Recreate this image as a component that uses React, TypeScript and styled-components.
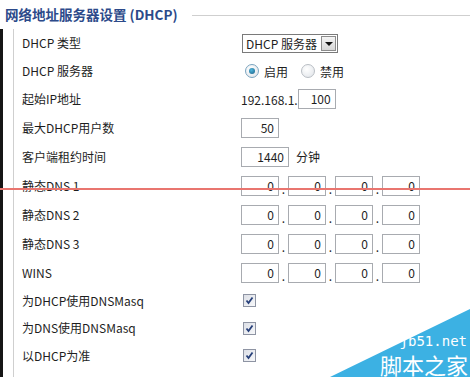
import React from "react"
import styled, { createGlobalStyle } from "styled-components"

const GlobalStyle = createGlobalStyle`
    html, body {
        margin: 0;
        padding: 0;
        background: #fff;
    }
    body {
        font-family: "Noto Sans CJK SC", "DejaVu Sans", sans-serif;
        font-size: 12px;
        color: #1e1e1e;
    }
`

const Page = styled.div`
    position: relative;
    width: 470px;
    height: 377px;
    overflow: hidden;
    background: #fff;
`

const Header = styled.div`
    display: flex;
    align-items: center;
    height: 29px;
    padding-left: 5px;
    gap: 14px;
`

const Title = styled.h2`
    margin: 0;
    font-size: 13.5px;
    font-weight: bold;
    color: #2c4a8a;
    white-space: nowrap;
    line-height: 29px;
`

const TitleRule = styled.div`
    flex: 1;
    height: 1px;
    background: #cfcfcf;
    margin-top: 1px;
`

const Edge = styled.div`
    border-left: 3px solid #151515;
    height: 348px;
`

const Fieldset = styled.div`
    margin-left: 10px;
    border-left: 1px solid #cfcfcf;
    padding-left: 8px;
    height: 100%;
`

const Row = styled.div<{ $h: number }>`
    display: grid;
    grid-template-columns: 219px 1fr;
    align-items: center;
    height: ${p => p.$h}px;
`

const Label = styled.div`
    white-space: nowrap;
    line-height: 14px;
`

const Controls = styled.div`
    display: flex;
    align-items: center;
    white-space: nowrap;
`

const SelectBox = styled.div`
    display: flex;
    align-items: center;
    justify-content: space-between;
    width: 91px;
    height: 17px;
    border: 1px solid #7a7a7a;
    padding-left: 3px;
    box-sizing: content-box;
    background: #fff;
    margin-left: 1px;
`

const SelectArrow = styled.div`
    width: 15px;
    height: 15px;
    margin-right: 1px;
    border: 1px solid #8c8c8c;
    box-sizing: border-box;
    background: linear-gradient(#f4f4f4, #d6d6d6);
    display: flex;
    align-items: center;
    justify-content: center;
    &::after {
        content: "";
        border-left: 4px solid transparent;
        border-right: 4px solid transparent;
        border-top: 4px solid #111;
        margin-top: 1px;
    }
`

const Radio = styled.span<{ $on?: boolean }>`
    display: inline-flex;
    align-items: center;
    justify-content: center;
    width: 12px;
    height: 12px;
    border-radius: 50%;
    border: 1px solid ${p => (p.$on ? "#7aa4bf" : "#b9bec4")};
    background: radial-gradient(circle at 40% 35%, #ffffff, #dfe3e8);
    margin-left: 4px;
    margin-right: 5px;
    &::after {
        content: "";
        display: ${p => (p.$on ? "block" : "none")};
        width: 6px;
        height: 6px;
        border-radius: 50%;
        background: radial-gradient(circle at 40% 35%, #4fb6dc, #1b5f86);
    }
`

const RadioText = styled.span<{ $gap?: number }>`
    margin-right: ${p => p.$gap || 0}px;
`

const Field = styled.div<{ $w?: number }>`
    width: ${p => p.$w || 38}px;
    height: 20px;
    border: 1px solid #a8abb0;
    box-sizing: border-box;
    text-align: right;
    padding-right: 4px;
    line-height: 18px;
    font-size: 12px;
`

const Dot = styled.span`
    width: 9px;
    text-align: center;
    line-height: 12px;
    padding-top: 6px;
`

const Unit = styled.span`
    margin-left: 7px;
`

const Check = styled.span`
    display: inline-flex;
    align-items: center;
    justify-content: center;
    width: 13px;
    height: 13px;
    margin-left: 2px;
    border: 1px solid #8e94a3;
    box-sizing: border-box;
    background: linear-gradient(135deg, #dcdfe6, #f7f8fa);
`

const RedLine = styled.div`
    position: absolute;
    left: 0;
    right: 0;
    top: 188px;
    height: 2px;
    background: #e9756f;
`

const Watermark = styled.div`
    position: absolute;
    right: 0;
    bottom: 0;
    width: 140px;
    height: 70px;
`

const MarkSite = styled.div`
    position: absolute;
    right: 3px;
    top: 27px;
    font-family: "DejaVu Sans Mono", monospace;
    font-size: 14px;
    color: #fff;
    line-height: 15px;
`

const MarkName = styled.div`
    position: absolute;
    right: 2px;
    bottom: 0;
    font-family: "Noto Sans CJK SC", sans-serif;
    font-size: 22px;
    color: #fff;
    line-height: 26px;
`

function IpFields() {
    return (
        <Controls>
            <Field>0</Field><Dot>.</Dot>
            <Field>0</Field><Dot>.</Dot>
            <Field>0</Field><Dot>.</Dot>
            <Field>0</Field>
        </Controls>
    )
}

function Tick() {
    return (
        <Check>
            <svg width="9" height="9" viewBox="0 0 9 9">
                <path d="M1.5 4.5 L3.5 7 L7.5 1.5" fill="none" stroke="#27407a" strokeWidth="1.8" />
            </svg>
        </Check>
    )
}

export default function App() {
    return (
        <Page>
            <GlobalStyle />
            <Header>
                <Title>网络地址服务器设置 (DHCP)</Title>
                <TitleRule />
            </Header>
            <Edge>
                <Fieldset>
                    <Row $h={28}>
                        <Label>DHCP 类型</Label>
                        <Controls>
                            <SelectBox>
                                <span>DHCP 服务器</span>
                                <SelectArrow />
                            </SelectBox>
                        </Controls>
                    </Row>
                    <Row $h={28}>
                        <Label>DHCP 服务器</Label>
                        <Controls>
                            <Radio $on />
                            <RadioText $gap={9}>启用</RadioText>
                            <Radio />
                            <RadioText>禁用</RadioText>
                        </Controls>
                    </Row>
                    <Row $h={28}>
                        <Label>起始IP地址</Label>
                        <Controls>
                            <span>192.168.1.</span>
                            <Field>100</Field>
                        </Controls>
                    </Row>
                    <Row $h={29}>
                        <Label>最大DHCP用户数</Label>
                        <Controls>
                            <Field>50</Field>
                        </Controls>
                    </Row>
                    <Row $h={29}>
                        <Label>客户端租约时间</Label>
                        <Controls>
                            <Field $w={48}>1440</Field>
                            <Unit>分钟</Unit>
                        </Controls>
                    </Row>
                    <Row $h={29}>
                        <Label>静态DNS 1</Label>
                        <IpFields />
                    </Row>
                    <Row $h={29}>
                        <Label>静态DNS 2</Label>
                        <IpFields />
                    </Row>
                    <Row $h={29}>
                        <Label>静态DNS 3</Label>
                        <IpFields />
                    </Row>
                    <Row $h={29}>
                        <Label>WINS</Label>
                        <IpFields />
                    </Row>
                    <Row $h={27}>
                        <Label>为DHCP使用DNSMasq</Label>
                        <Controls><Tick /></Controls>
                    </Row>
                    <Row $h={28}>
                        <Label>为DNS使用DNSMasq</Label>
                        <Controls><Tick /></Controls>
                    </Row>
                    <Row $h={27}>
                        <Label>以DHCP为准</Label>
                        <Controls><Tick /></Controls>
                    </Row>
                </Fieldset>
            </Edge>
            <RedLine />
            <Watermark>
                <svg width="140" height="70" viewBox="0 0 140 70">
                    <polygon points="0,70 140,2 140,70" fill="#3cb1e3" />
                </svg>
                <MarkSite>jb51.net</MarkSite>
                <MarkName>脚本之家</MarkName>
            </Watermark>
        </Page>
    )
}
